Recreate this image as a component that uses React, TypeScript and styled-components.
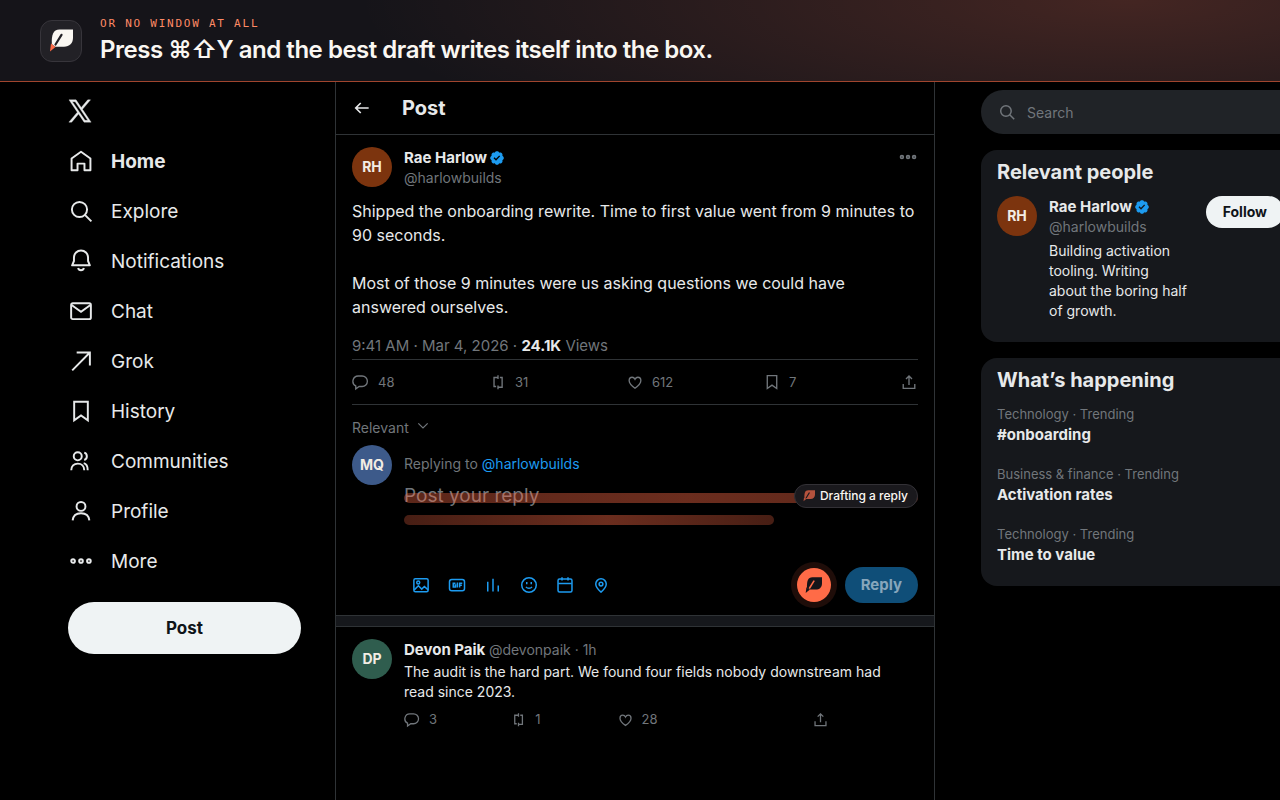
import React from "react";
import styled, { createGlobalStyle } from "styled-components";

const c = {
  text: "#e7e9ea",
  muted: "#71767b",
  line: "#2f3336",
  card: "#16181c",
  blue: "#1d9bf0",
  ember: "#ff6b47",
};

const GlobalStyle = createGlobalStyle`
  *, *::before, *::after { box-sizing: border-box; }
  body {
    margin: 0;
    background: #000;
    color: ${c.text};
    font-family: Inter, "Liberation Sans", sans-serif;
    font-size: 14px;
    line-height: 20px;
    overflow-x: hidden;
  }
  button, input, textarea { font: inherit; }
  h1, h2, p, ul { margin: 0; padding: 0; }
  ul { list-style: none; }
  a { color: inherit; text-decoration: none; }
`;

const Page = styled.div`
  display: flex;
  flex-direction: column;
  min-height: 100vh;
`;

/* ---------- banner ---------- */

const Banner = styled.header`
  display: flex;
  align-items: center;
  gap: 18px;
  min-height: 82px;
  padding: 0 40px;
  border-bottom: 1px solid #a0452e;
  background:
    radial-gradient(60% 220% at 88% 0%, rgba(255, 107, 71, 0.2), rgba(255, 107, 71, 0)),
    #151419;
`;

const BannerMark = styled.div`
  display: flex;
  align-items: center;
  justify-content: center;
  width: 42px;
  height: 42px;
  border: 1px solid #37353b;
  border-radius: 12px;
  background: #222126;
`;

const BannerCopy = styled.div`
  display: flex;
  flex-direction: column;
  gap: 4px;
`;

const Eyebrow = styled.p`
  color: #ff8a65;
  font-family: "DejaVu Sans Mono", "Liberation Mono", monospace;
  font-size: 11px;
  line-height: 14px;
  letter-spacing: 0.16em;
  text-transform: uppercase;
`;

const Headline = styled.h1`
  color: #faf7f2;
  font-size: 24px;
  font-weight: 600;
  line-height: 30px;
  letter-spacing: -0.02em;
`;

/* ---------- columns ---------- */

const Columns = styled.div`
  flex: 1;
  display: grid;
  grid-template-columns: clamp(275px, calc((100vw - 610px) / 2), 480px) 600px minmax(365px, 1fr);
`;

const Side = styled.nav`
  display: flex;
  flex-direction: column;
  width: 267px;
  margin-left: auto;
  padding: 4px 34px 0 0;
`;

const NavLink = styled.a<{ $active?: boolean }>`
  display: flex;
  align-items: center;
  gap: 17px;
  height: 50px;
  font-size: 19px;
  line-height: 24px;
  font-weight: ${(p) => (p.$active ? 700 : 400)};
`;

const NavLabel = styled.span`
  padding-top: 2px;
`;

const PostButton = styled.button`
  height: 52px;
  margin-top: 16px;
  border: 0;
  border-radius: 26px;
  background: #eff3f4;
  color: #0f1419;
  font-size: 17px;
  font-weight: 700;
`;

const Main = styled.main`
  border: solid ${c.line};
  border-width: 0 1px;
`;

const TopBar = styled.div`
  display: flex;
  align-items: center;
  gap: 30px;
  height: 53px;
  padding: 0 16px;
  border-bottom: 1px solid ${c.line};
`;

const TopTitle = styled.h2`
  font-size: 20px;
  font-weight: 700;
  line-height: 24px;
`;

const IconButton = styled.button<{ $tone?: string }>`
  display: inline-flex;
  align-items: center;
  gap: 8px;
  padding: 0;
  border: 0;
  background: none;
  color: ${(p) => p.$tone || c.text};
  font-size: 13px;
  line-height: 20px;
`;

/* ---------- posts ---------- */

const Avatar = styled.div<{ $bg: string }>`
  display: flex;
  flex: none;
  align-items: center;
  justify-content: center;
  width: 40px;
  height: 40px;
  border-radius: 50%;
  background: ${(p) => p.$bg};
  color: #f3ede4;
  font-size: 14px;
  font-weight: 700;
`;

const Post = styled.article`
  padding: 12px 16px 0;
`;

const Author = styled.div`
  display: flex;
  gap: 12px;
  height: 40px;
`;

const AuthorText = styled.div`
  flex: 1;
  min-width: 0;
  padding-top: 1px;
`;

const Name = styled.div`
  display: flex;
  align-items: center;
  gap: 2px;
  font-size: 15px;
  font-weight: 700;
`;

const Muted = styled.span`
  color: ${c.muted};
  font-size: 14px;
  font-weight: 400;
`;

const Handle = styled.div`
  color: ${c.muted};
`;

const MoreSlot = styled.div`
  height: 20px;
  display: flex;
`;

const PostBody = styled.p`
  margin-top: 12px;
  font-size: 16px;
  line-height: 24px;
  white-space: pre-line;
`;

const Meta = styled.p`
  margin: 17px 0 3px;
  color: ${c.muted};
  font-size: 15px;
  strong { color: ${c.text}; font-weight: 700; }
`;

const Stats = styled.div`
  display: grid;
  grid-template-columns: repeat(4, 1fr) auto;
  align-items: center;
  height: 46px;
  border: solid ${c.line};
  border-width: 1px 0;
`;

const SortButton = styled.button`
  display: flex;
  gap: 6px;
  margin: 13px 0 7px;
  padding: 0;
  border: 0;
  background: none;
  color: ${c.muted};
`;

const Composer = styled.form`
  display: flex;
  gap: 12px;
  padding-bottom: 12px;
`;

const ComposerBody = styled.div`
  flex: 1;
  min-width: 0;
  padding-top: 9px;
`;

const ReplyTo = styled.p`
  color: ${c.muted};
  a { color: ${c.blue}; }
`;

const Field = styled.div`
  position: relative;
  margin-top: 9px;
`;

const ReplyInput = styled.textarea`
  display: block;
  width: 100%;
  height: 84px;
  padding: 1px 0 0;
  border: 0;
  outline: 0;
  resize: none;
  background: none;
  color: ${c.text};
  font-size: 19px;
  line-height: 24px;
  &::placeholder { color: ${c.muted}; opacity: 1; }
`;

const Shimmer = styled.div`
  position: absolute;
  inset: 10px 0 auto;
  display: grid;
  gap: 12px;
  pointer-events: none;
`;

const ShimmerBar = styled.div<{ $width: string; $edge: number }>`
  width: ${(p) => p.$width};
  height: 10px;
  border-radius: 5px;
  background: linear-gradient(
    90deg,
    rgba(255, 107, 71, ${(p) => p.$edge}),
    rgba(255, 107, 71, 0.42) 55%,
    rgba(255, 107, 71, ${(p) => p.$edge})
  );
`;

const DraftPill = styled.div`
  position: absolute;
  top: 1px;
  right: 0;
  display: flex;
  align-items: center;
  gap: 5px;
  height: 24px;
  padding: 0 9px 0 8px;
  border: 1px solid #333136;
  border-radius: 12px;
  background: #1a191d;
  color: #faf7f2;
  font-size: 12px;
  font-weight: 500;
  line-height: 16px;
`;

const Tools = styled.div`
  display: flex;
  align-items: center;
  padding-left: 8px;
`;

const ToolSet = styled.div`
  display: flex;
  gap: 18px;
  margin-right: auto;
`;

const QuillButton = styled.button`
  display: flex;
  align-items: center;
  justify-content: center;
  width: 34px;
  height: 34px;
  margin-right: 14px;
  padding: 0;
  border: 0;
  border-radius: 50%;
  background: ${c.ember};
  box-shadow: 0 0 0 6px rgba(255, 107, 71, 0.12);
`;

const ReplyButton = styled.button`
  height: 36px;
  padding: 0 16px;
  border: 0;
  border-radius: 18px;
  background: #0f4e78;
  color: #87a6bc;
  font-size: 15px;
  font-weight: 700;
`;

const Band = styled.div`
  height: 12px;
  border: solid ${c.line};
  border-width: 1px 0;
  background: ${c.card};
`;

const Answer = styled.article`
  display: flex;
  gap: 12px;
  padding: 12px 16px;
`;

const AnswerText = styled.p`
  margin-top: 2px;
  padding-right: 16px;
`;

const AnswerActions = styled.div`
  display: grid;
  grid-template-columns: repeat(4, 1fr);
  max-width: 425px;
  margin-top: 7px;
  ${IconButton}:last-child { justify-self: end; }
`;

/* ---------- right column ---------- */

const Aside = styled.aside`
  display: flex;
  flex-direction: column;
  gap: 16px;
  max-width: 396px;
  padding: 8px 0 0 46px;
`;

const SearchBox = styled.label`
  display: flex;
  align-items: center;
  gap: 11px;
  height: 44px;
  padding: 0 17px;
  border-radius: 22px;
  background: #202327;
  color: ${c.muted};
`;

const SearchInput = styled.input`
  flex: 1;
  min-width: 0;
  padding: 1px 0 0;
  border: 0;
  outline: 0;
  background: none;
  color: ${c.text};
  &::placeholder { color: ${c.muted}; opacity: 1; }
`;

const Card = styled.section`
  padding: 10px 0;
  border-radius: 16px;
  background: ${c.card};
`;

const CardTitle = styled.h2`
  padding: 0 16px;
  font-size: 20px;
  font-weight: 700;
  line-height: 24px;
`;

const Person = styled.div`
  display: flex;
  align-items: flex-start;
  gap: 12px;
  padding: 12px 16px 11px;
`;

const Bio = styled.p`
  margin-top: 4px;
  white-space: pre-line;
`;

const FollowButton = styled.button`
  height: 32px;
  padding: 0 17px;
  border: 0;
  border-radius: 16px;
  background: #eff3f4;
  color: #0f1419;
  font-size: 14px;
  font-weight: 700;
`;

const Trends = styled.ul`
  display: grid;
  gap: 19px;
  padding: 12px 16px 11px;
`;

const TrendTopic = styled.div`
  color: ${c.muted};
  font-size: 13px;
`;

const TrendName = styled.a`
  display: block;
  margin-top: 1px;
  font-size: 15px;
  font-weight: 700;
`;

/* ---------- icons ---------- */

const Svg = styled.svg<{ $w: number }>`
  display: block;
  flex: none;
  fill: none;
  stroke: currentColor;
  stroke-width: ${(p) => p.$w};
`;

type IconName = keyof typeof shapes;

const shapes = {
  home: <path d="M3.3 9.7 12 3.5l8.700 6.200V20.600h-5.500v-6.200H8.800v6.200H3.300z" strokeLinejoin="round" />,
  search: <><circle cx="10.6" cy="10.6" r="7" /><path d="m15.6 15.6 6 6" /></>,
  bell: <><path d="M3.8 16h16.400l-1.700-4V8.800a6.500 6.500 0 0 0-13 0V12z" strokeLinejoin="round" /><path d="M9.300 18.500c.7 2.600 4.700 2.600 5.400 0" /></>,
  mail: <><rect x="2.9" y="4.9" width="18.2" height="14.6" rx="1.5" /><path d="m3.300 6.500 8.700 6.300 8.700-6.300" /></>,
  arrow: <path d="M3.900 20.600 20.200 4.200M8 4.200h12.200v12" />,
  bookmark: <path d="M5.700 3.400h12.600v17.200L12 16.200l-6.300 4.400z" />,
  people: <><circle cx="9" cy="7.7" r="3.7" /><path d="M3 20.600c0-3.800 2.400-6.200 6-6.200s6 2.400 6 6.200M15 4.300c3.200.8 3.200 6 0 6.800M14.500 14c2.500.6 3.700 3 3.700 6.600" /></>,
  person: <><circle cx="12" cy="7.8" r="4.1" /><path d="M4.300 20.700c.4-4.400 3.200-6.700 7.700-6.700s7.300 2.300 7.700 6.700" /></>,
  dots: <><circle cx="4.7" cy="12" r="1.7" /><circle cx="12" cy="12" r="1.7" /><circle cx="19.3" cy="12" r="1.7" /></>,
  back: <path d="M20 12H5M10.500 6 4.500 12l6 6" />,
  comment: <path d="M8.200 4h5.300a7 7 0 0 1 0 14H9.500L5 21.300v-4.100A7 7 0 0 1 8.200 4z" />,
  repeat: <path d="M9.500 18H6.700V6H12M12 3v5M14.500 6h3v13H12M12 16.500v5" />,
  heart: <path d="M12 20.300C6.800 16.700 4.200 13.500 4.200 10.100 4.200 7.500 6 5.700 8.200 5.700c1.700 0 2.900.9 3.800 2.700.9-1.800 2.100-2.700 3.800-2.700 2.200 0 4 1.800 4 4.400 0 3.400-2.600 6.600-7.800 10.200z" />,
  share: <path d="M12 16V4.500M8 8l4-4 4 4M4.300 14.500v6h15.400v-6" />,
  chevron: <path d="m5 8 7 7 7-7" />,
  image: <><rect x="2.5" y="3.5" width="19" height="17.5" rx="2" /><circle cx="8.3" cy="8.8" r="2" /><path d="m3 18.500 5.500-5.500 4.500 4.500 3.500-3.500 5 4.500" /></>,
  gif: <><rect x="2" y="4.6" width="20" height="15" rx="3" /><path d="M10 9.500H7v5h3V12H8.500M12.500 8.800v6.400M15.500 15.200V9.500H19M15.500 12.300h3" /></>,
  poll: <path d="M5 20.500V7.600M12 20.500V3.600M19 20.500v-8" />,
  smile: <><circle cx="12" cy="12" r="9.7" /><path d="M8 14.500c2 2.600 6 2.600 8 0M9 8v3M15 8v3" /></>,
  calendar: <><rect x="2.7" y="4" width="18.6" height="17.3" rx="2" /><path d="M3 10h18M8 1.500V6M16 1.500V6" /></>,
  pin: <><path d="M12 21.500c-4.700-4-7-7.300-7-10.700a7 7 0 0 1 14 0c0 3.400-2.300 6.700-7 10.700z" /><circle cx="12" cy="10.8" r="2.5" /></>,
};

const Icon = ({ name, size = 18, w = 2 }: { name: IconName; size?: number; w?: number }) => (
  <Svg viewBox="0 0 24 24" width={size} height={size} $w={w} aria-hidden="true">{shapes[name]}</Svg>
);

const XLogo = () => (
  <svg viewBox="1.5 1.5 21 21" width="24" height="24" fill={c.text} stroke={c.text} strokeWidth="0.3" role="img" aria-label="X">
    <path d="M21.742 21.75l-7.563-11.179 7.056-8.321h-2.456l-5.691 6.714-4.540-6.714H2.359l7.290 10.776L2.250 21.750h2.456l6.035-7.118 4.818 7.118h6.191zM7.739 3.818L18.810 20.182h-2.447L5.290 3.818h2.447z" />
  </svg>
);

const Verified = () => (
  <svg viewBox="0 0 22 22" width="16" height="16" fill={c.blue} role="img" aria-label="Verified">
    <path d="M20.396 11c-.018-.646-.215-1.275-.57-1.816-.354-.54-.852-.972-1.438-1.246.223-.607.27-1.264.14-1.897-.131-.634-.437-1.218-.882-1.687-.47-.445-1.053-.75-1.687-.882-.633-.13-1.29-.083-1.897.14-.273-.587-.704-1.086-1.245-1.44S11.647 1.620 11 1.604c-.646.017-1.273.213-1.813.568s-.969.854-1.240 1.440c-.608-.223-1.267-.272-1.902-.140-.635.130-1.220.436-1.690.882-.445.470-.749 1.055-.878 1.688-.130.633-.080 1.290.144 1.896-.587.274-1.087.705-1.443 1.245-.356.540-.555 1.170-.574 1.817.020.647.218 1.276.574 1.817.356.540.856.972 1.443 1.245-.224.606-.274 1.263-.144 1.896.130.634.433 1.218.877 1.688.470.443 1.054.747 1.687.878.633.132 1.290.084 1.897-.136.274.586.705 1.084 1.246 1.439.540.354 1.170.551 1.816.569.647-.016 1.276-.213 1.817-.567s.972-.854 1.245-1.440c.604.239 1.266.296 1.903.164.636-.132 1.220-.447 1.680-.907.460-.460.776-1.044.908-1.681s.075-1.299-.165-1.903c.586-.274 1.084-.705 1.439-1.246.354-.540.551-1.170.569-1.816zM9.662 14.850l-3.429-3.428 1.293-1.302 2.072 2.072 4.400-4.794 1.347 1.246z" />
  </svg>
);

const Quill = ({ size, leaf, vein, tip }: { size: number; leaf: string; vein: string; tip: string }) => (
  <svg viewBox="0 0 24 24" width={size} height={size} aria-hidden="true">
    <path d="M24 .5v8.300c0 5.500-3.500 9-9 9H6L2.800 15C2.500 6 4 .500 10.500.500z" fill={leaf} />
    <path d="M2 14.500 6.500 18 1 22.500z" fill={tip} />
    <path d="M12.500 5.800 6.500 15.500" stroke={vein} strokeWidth="2.200" strokeLinecap="round" />
  </svg>
);

const nav: { icon: IconName; label: string }[] = [
  { icon: "home", label: "Home" },
  { icon: "search", label: "Explore" },
  { icon: "bell", label: "Notifications" },
  { icon: "mail", label: "Chat" },
  { icon: "arrow", label: "Grok" },
  { icon: "bookmark", label: "History" },
  { icon: "people", label: "Communities" },
  { icon: "person", label: "Profile" },
  { icon: "dots", label: "More" },
];

const tools: { icon: IconName; label: string }[] = [
  { icon: "image", label: "Add photo" },
  { icon: "gif", label: "Add GIF" },
  { icon: "poll", label: "Add poll" },
  { icon: "smile", label: "Add emoji" },
  { icon: "calendar", label: "Schedule" },
  { icon: "pin", label: "Add location" },
];

const trends = [
  { topic: "Technology · Trending", name: "#onboarding" },
  { topic: "Business & finance · Trending", name: "Activation rates" },
  { topic: "Technology · Trending", name: "Time to value" },
];

const Action = ({ name, label, count, size }: { name: IconName; label: string; count?: string; size: number }) => (
  <IconButton type="button" $tone={c.muted} aria-label={label}>
    <Icon name={name} size={size} w={1.8} />
    {count}
  </IconButton>
);

export default function App() {
  return (
    <Page>
      <GlobalStyle />
      <Banner>
        <BannerMark>
          <Quill size={24} leaf="#faf7f2" vein="#222126" tip={c.ember} />
        </BannerMark>
        <BannerCopy>
          <Eyebrow>Or no window at all</Eyebrow>
          <Headline>Press ⌘⇧Y and the best draft writes itself into the box.</Headline>
        </BannerCopy>
      </Banner>

      <Columns>
        <Side aria-label="Primary">
          <NavLink href="#top"><XLogo /></NavLink>
          {nav.map((n, i) => (
            <NavLink key={n.label} href="#top" $active={i === 0}>
              <Icon name={n.icon} size={26} w={1.8} />
              <NavLabel>{n.label}</NavLabel>
            </NavLink>
          ))}
          <PostButton type="button">Post</PostButton>
        </Side>

        <Main>
          <TopBar>
            <IconButton type="button" aria-label="Back"><Icon name="back" size={20} /></IconButton>
            <TopTitle>Post</TopTitle>
          </TopBar>
          <Post>
            <Author>
              <Avatar $bg="#7c340e">RH</Avatar>
              <AuthorText>
                <Name>Rae Harlow <Verified /></Name>
                <Handle>@harlowbuilds</Handle>
              </AuthorText>
              <MoreSlot>
                <IconButton type="button" $tone={c.muted} aria-label="More options"><Icon name="dots" size={20} /></IconButton>
              </MoreSlot>
            </Author>
            <PostBody>
              {"Shipped the onboarding rewrite. Time to first value went from 9 minutes to 90 seconds.\n\nMost of those 9 minutes were us asking questions we could have answered ourselves."}
            </PostBody>
            <Meta>9:41 AM · Mar 4, 2026 · <strong>24.1K</strong> Views</Meta>
            <Stats>
              <Action name="comment" label="Replies" count="48" size={18} />
              <Action name="repeat" label="Reposts" count="31" size={18} />
              <Action name="heart" label="Likes" count="612" size={18} />
              <Action name="bookmark" label="Bookmarks" count="7" size={18} />
              <Action name="share" label="Share" size={18} />
            </Stats>
            <SortButton type="button">Relevant <Icon name="chevron" size={16} w={1.8} /></SortButton>
            <Composer onSubmit={(e) => e.preventDefault()}>
              <Avatar $bg="#3d5a8a">MQ</Avatar>
              <ComposerBody>
                <ReplyTo>Replying to <a href="#top">@harlowbuilds</a></ReplyTo>
                <Field>
                  <ReplyInput aria-label="Post your reply" placeholder="Post your reply" />
                  <Shimmer>
                    <ShimmerBar $width="100%" $edge={0.36} />
                    <ShimmerBar $width="72%" $edge={0.28} />
                  </Shimmer>
                  <DraftPill role="status">
                    <Quill size={12} leaf="#b5523d" vein="#1a191d" tip="#b5523d" />
                    Drafting a reply
                  </DraftPill>
                </Field>
                <Tools>
                  <ToolSet>
                    {tools.map((t) => (
                      <IconButton key={t.icon} type="button" $tone={c.blue} aria-label={t.label}>
                        <Icon name={t.icon} size={18} />
                      </IconButton>
                    ))}
                  </ToolSet>
                  <QuillButton type="button" aria-label="Draft a reply">
                    <Quill size={17} leaf="#151419" vein={c.ember} tip="#151419" />
                  </QuillButton>
                  <ReplyButton type="submit">Reply</ReplyButton>
                </Tools>
              </ComposerBody>
            </Composer>
          </Post>
          <Band />
          <Answer>
            <Avatar $bg="#2f5d4e">DP</Avatar>
            <AuthorText>
              <Name><span>Devon Paik <Muted>@devonpaik · 1h</Muted></span></Name>
              <AnswerText>The audit is the hard part. We found four fields nobody downstream had read since 2023.</AnswerText>
              <AnswerActions>
                <Action name="comment" label="Replies" count="3" size={17} />
                <Action name="repeat" label="Reposts" count="1" size={17} />
                <Action name="heart" label="Likes" count="28" size={17} />
                <Action name="share" label="Share" size={17} />
              </AnswerActions>
            </AuthorText>
          </Answer>
        </Main>

        <Aside>
          <SearchBox>
            <Icon name="search" size={18} />
            <SearchInput type="search" placeholder="Search" aria-label="Search" />
          </SearchBox>
          <Card>
            <CardTitle>Relevant people</CardTitle>
            <Person>
              <Avatar $bg="#7c340e">RH</Avatar>
              <AuthorText>
                <Name>Rae Harlow <Verified /></Name>
                <Handle>@harlowbuilds</Handle>
                <Bio>{"Building activation tooling. Writing\nabout the boring half of growth."}</Bio>
              </AuthorText>
              <FollowButton type="button">Follow</FollowButton>
            </Person>
          </Card>
          <Card>
            <CardTitle>What’s happening</CardTitle>
            <Trends>
              {trends.map((t) => (
                <li key={t.name}>
                  <TrendTopic>{t.topic}</TrendTopic>
                  <TrendName href="#top">{t.name}</TrendName>
                </li>
              ))}
            </Trends>
          </Card>
        </Aside>
      </Columns>
    </Page>
  );
}
